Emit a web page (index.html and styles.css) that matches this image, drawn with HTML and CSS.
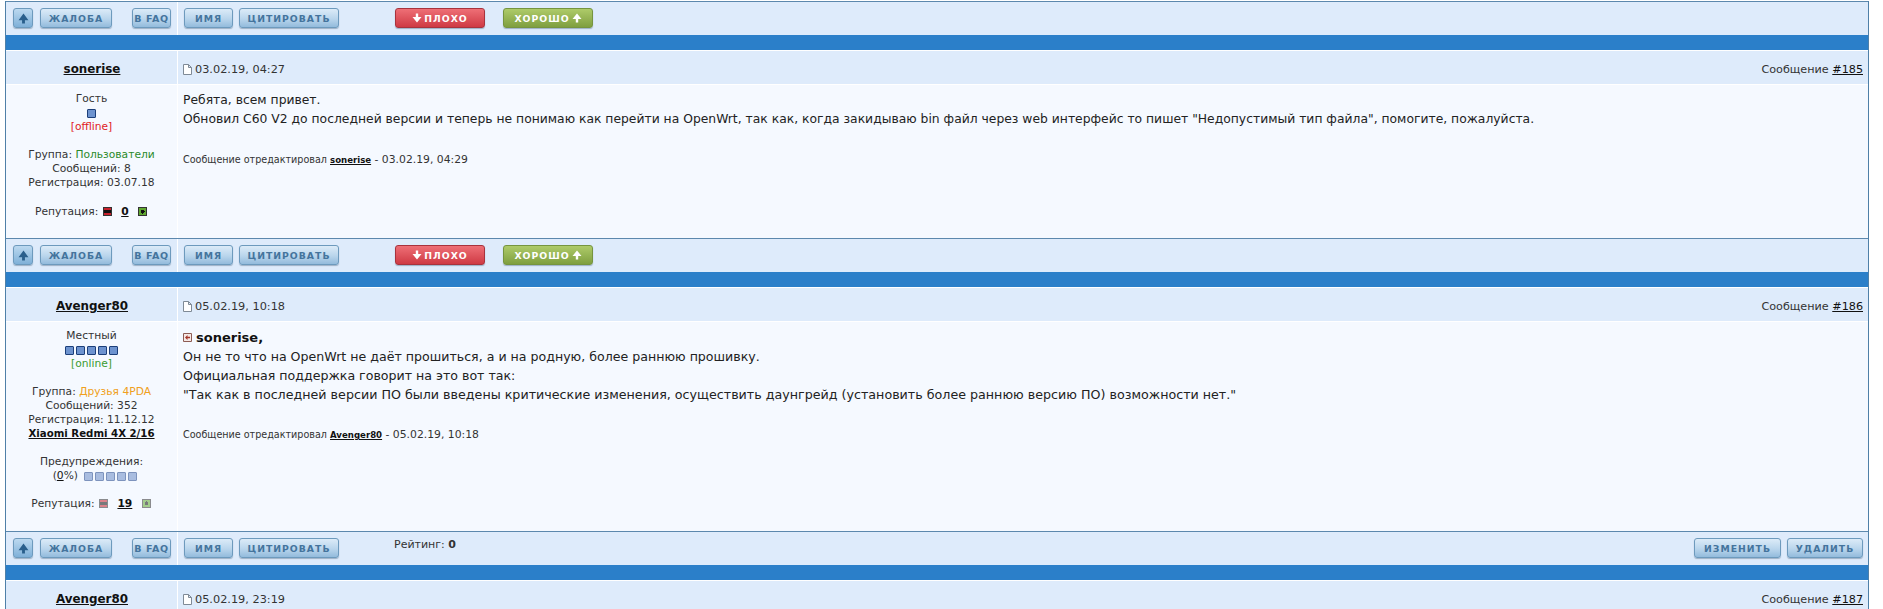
FILE: index.html
```html
<!DOCTYPE html>
<html lang="ru">
<head>
<meta charset="utf-8">
<title>Тема</title>
<link rel="stylesheet" href="styles.css">
</head>
<body>
<svg class="defs" width="0" height="0" aria-hidden="true">
  <symbol id="up" viewBox="0 0 10 10"><path d="M5 .5 9.5 6H6.2V9.5H3.8V6H.5Z"/></symbol>
  <symbol id="down" viewBox="0 0 10 10"><path d="M5 9.5 .5 4H3.8V.5H6.2V4H9.5Z"/></symbol>
  <symbol id="tree" viewBox="0 0 10 10"><path d="M5 .5 9.5 6.6H6.3V9.5H3.7V6.6H.5Z"/></symbol>
  <symbol id="doc" viewBox="0 0 9 11"><path d="M.5.5H5.5L8.5 3.5V10.5H.5ZM5.5.5V3.5H8.5" fill="#fff" stroke="#7f8a96"/></symbol>
</svg>
<main class="topic">
  <section class="bar first">
    <div class="side">
      <a class="btn tiny"><svg class="ico"><use href="#tree"/></svg></a>
      <a class="btn w72">ЖАЛОБА</a>
      <a class="btn faq">В FAQ</a>
    </div>
    <div class="act">
      <a class="btn w49">ИМЯ</a>
      <a class="btn w99">ЦИТИРОВАТЬ</a>
      <a class="btn red"><svg class="ico"><use href="#down"/></svg>ПЛОХО</a>
      <a class="btn green">ХОРОШО<svg class="ico"><use href="#up"/></svg></a>
    </div>
  </section>
  <div class="strip"></div>
  <header class="head">
    <div class="name"><a>sonerise</a></div>
    <div class="meta">
      <span class="date"><svg class="doc"><use href="#doc"/></svg>03.02.19, 04:27</span>
      <span>Сообщение <a>#185</a></span>
    </div>
  </header>
  <section class="post">
    <aside class="user u1">
      <div>Гость</div>
      <div class="pips"><i class="pip"></i></div>
      <div class="off">[offline]</div>
      <div class="gap">Группа: <span class="grn">Пользователи</span></div>
      <div>Сообщений: 8</div>
      <div>Регистрация: 03.07.18</div>
      <div class="gap rep">Репутация: <i class="vote minus"></i> <a>0</a> <i class="vote plus"></i></div>
    </aside>
    <article class="text">
      <p>Ребята, всем привет.</p>
      <p>Обновил C60 V2 до последней версии и теперь не понимаю как перейти на OpenWrt, так как, когда закидываю bin файл через web интерфейс то пишет "Недопустимый тип файла", помогите, пожалуйста.</p>
      <p class="edit">Сообщение отредактировал <a>sonerise</a><span class="when"> - 03.02.19, 04:29</span></p>
    </article>
  </section>
  <section class="bar">
    <div class="side">
      <a class="btn tiny"><svg class="ico"><use href="#tree"/></svg></a>
      <a class="btn w72">ЖАЛОБА</a>
      <a class="btn faq">В FAQ</a>
    </div>
    <div class="act">
      <a class="btn w49">ИМЯ</a>
      <a class="btn w99">ЦИТИРОВАТЬ</a>
      <a class="btn red"><svg class="ico"><use href="#down"/></svg>ПЛОХО</a>
      <a class="btn green">ХОРОШО<svg class="ico"><use href="#up"/></svg></a>
    </div>
  </section>
  <div class="strip"></div>
  <header class="head">
    <div class="name"><a>Avenger80</a></div>
    <div class="meta">
      <span class="date"><svg class="doc"><use href="#doc"/></svg>05.02.19, 10:18</span>
      <span>Сообщение <a>#186</a></span>
    </div>
  </header>
  <section class="post">
    <aside class="user u2">
      <div>Местный</div>
      <div class="pips"><i class="pip"></i><i class="pip"></i><i class="pip"></i><i class="pip"></i><i class="pip"></i></div>
      <div class="onl">[online]</div>
      <div class="gap">Группа: <span class="org">Друзья 4PDA</span></div>
      <div>Сообщений: 352</div>
      <div>Регистрация: 11.12.12</div>
      <div><a class="dev">Xiaomi Redmi 4X 2/16</a></div>
      <div class="gap">Предупреждения:</div>
      <div class="warn">(<a>0</a>%) <span class="pips dim"><i class="pip"></i><i class="pip"></i><i class="pip"></i><i class="pip"></i><i class="pip"></i></span></div>
      <div class="gap rep">Репутация: <i class="vote minus dimv"></i> <a>19</a> <i class="vote plus dimv"></i></div>
    </aside>
    <article class="text wide">
      <p class="quote"><svg class="back" viewBox="0 0 9 9"><path d="M.5.5H8.5V8.5H.5Z" fill="#f6e9e6" stroke="#8d5c54"/><path d="M2 4.5 4.5 2V3.7H7V5.3H4.5V7Z" fill="#a5362a"/></svg><b>sonerise,</b></p>
      <p>Он не то что на OpenWrt не даёт прошиться, а и на родную, более раннюю прошивку.</p>
      <p>Официальная поддержка говорит на это вот так:</p>
      <p class="long">"Так как в последней версии ПО были введены критические изменения, осуществить даунгрейд (установить более раннюю версию ПО) возможности нет."</p>
      <p class="edit">Сообщение отредактировал <a>Avenger80</a><span class="when"> - 05.02.19, 10:18</span></p>
    </article>
  </section>
  <section class="bar">
    <div class="side">
      <a class="btn tiny"><svg class="ico"><use href="#tree"/></svg></a>
      <a class="btn w72">ЖАЛОБА</a>
      <a class="btn faq">В FAQ</a>
    </div>
    <div class="act">
      <a class="btn w49">ИМЯ</a>
      <a class="btn w99">ЦИТИРОВАТЬ</a>
      <span class="rating">Рейтинг: <b>0</b></span>
      <span class="push"></span>
      <a class="btn w87">ИЗМЕНИТЬ</a>
      <a class="btn w76">УДАЛИТЬ</a>
    </div>
  </section>
  <div class="strip"></div>
  <header class="head">
    <div class="name"><a>Avenger80</a></div>
    <div class="meta">
      <span class="date"><svg class="doc"><use href="#doc"/></svg>05.02.19, 23:19</span>
      <span>Сообщение <a>#187</a></span>
    </div>
  </header>
</main>
</body>
</html>
```
FILE: styles.css
```css
html, body { margin: 0; padding: 0; height: 609px; overflow: hidden; background: #fff; }
body { font-family: "DejaVu Sans", Verdana, sans-serif; font-size: 11px; color: #222; }
.defs { display: block; height: 0; }
a { color: #111; text-decoration: underline; }

.topic { margin: 1px 14px 0 5px; border-left: 1px solid #4f80a8; border-right: 1px solid #4f80a8; }

.bar { display: grid; grid-template-columns: 171px 1fr; column-gap: 1px; height: 33px; border-top: 1px solid #5c88ad; background: #fff; }
.side, .act { display: flex; align-items: flex-start; padding-top: 6px; box-sizing: border-box; background: #deebfb; }
.side { padding-left: 7px; }
.act { padding-left: 6px; padding-right: 5px; }

.btn { display: flex; align-items: center; justify-content: center; gap: 2px; box-sizing: border-box; height: 20px; border: 1px solid #6d9abd; border-radius: 3px;
  background: linear-gradient(#dcebf8, #b9d5ec 55%, #93bbdc); box-shadow: 0 1px 1px rgba(60,90,120,.4);
  color: #44749d; font-size: 9.3px; font-weight: bold; letter-spacing: 1px; text-decoration: none; white-space: nowrap; }
.ico { width: 10px; height: 10px; fill: currentColor; }
.tiny { width: 20px; color: #2a5f8c; background: linear-gradient(#bcd9f0, #7fb0d8); }
.tiny .ico { width: 11px; height: 11px; }
.w72 { width: 72px; margin-left: 7px; }
.faq { width: 39px; margin-left: 20px; letter-spacing: .6px; font-size: 9.5px; }
.w49 { width: 49px; }
.w99 { width: 100px; margin-left: 6px; }
.w87 { width: 87px; }
.w76 { width: 76px; margin-left: 6px; }
.red { width: 90px; margin-left: 56px; border-color: #a8333d; color: #fff; background: linear-gradient(#ee6f76, #cf3a44); }
.green { width: 90px; margin-left: 18px; border-color: #76953f; color: #fff; background: linear-gradient(#aecb69, #7f9f40); }
.rating { margin-left: 55px; line-height: 14px; color: #333; font-size: 11px; }
.push { flex: 1; }

.strip { height: 15px; background: #2b7fc9; border-bottom: 1px solid #fff; }

.head { display: grid; grid-template-columns: 171px 1fr; column-gap: 1px; height: 34px; background: #fff; border-bottom: 1px solid #fff; box-sizing: border-box; }
.name, .meta { display: flex; align-items: center; padding-top: 3px; box-sizing: border-box; background: #deebfb; }
.name { justify-content: center; padding-left: 1px; font-size: 11.9px; font-weight: bold; }
.meta { justify-content: space-between; padding-left: 5px; padding-right: 5px; font-size: 11.2px; color: #333; }
.date { display: flex; align-items: center; font-size: 11.3px; }
.doc { width: 9px; height: 11px; margin-right: 3px; }

.post { display: grid; grid-template-columns: 171px 1fr; column-gap: 1px; background: #fff; }
.user { background: #f5f9ff; text-align: center; font-size: 10.7px; line-height: 14px; color: #333; padding-top: 7px; box-sizing: border-box; }
.u1 { height: 153px; }
.u2 { height: 209px; }
.gap { margin-top: 14px; }
.u1 .rep { margin-top: 15px; }
.warn { padding-left: 7px; }
.off { color: #e01b24; }
.onl { color: #3b9b2f; }
.grn { color: #2a8a2a; }
.org { color: #f0a020; }
.dev { font-weight: bold; font-size: 10.2px; }
.pips { display: flex; justify-content: center; gap: 2px; height: 14px; align-items: center; }
.pip { width: 7px; height: 7px; border: 1px solid #1c3f7a; border-radius: 1px; background: #6d93cf; }
.dim { display: inline-flex; vertical-align: middle; margin-left: 3px; }
.dim .pip { border-color: #7d93bd; background: #a9bde0; }
.rep a { font-weight: bold; margin: 0 5px; }
.vote { display: inline-block; width: 7px; height: 7px; border: 1px solid #333; vertical-align: -1px; margin: 0 1px; }
.minus { background: linear-gradient(#c8202c 0 2px, #111 2px 5px, #c8202c 5px); }
.plus { background: radial-gradient(circle, #111 0 2px, #5fa82f 2px); }
.dimv { opacity: .55; }

.text { background: #f5f9ff; padding: 6px 5px 0; font-size: 12.35px; line-height: 19px; color: #222; }
.text.wide { font-size: 12.6px; }
.text p { margin: 0; }
.text .long { font-size: 12.68px; }
.quote { display: flex; align-items: center; }
.back { width: 9px; height: 9px; margin-right: 4px; }
.quote b { font-size: 13px; color: #111; }
.text .edit { margin-top: 24px; font-size: 9.6px; line-height: 14px; color: #333; }
.edit a { font-weight: bold; font-size: 8.6px; }
.when { font-size: 10.8px; }
```
